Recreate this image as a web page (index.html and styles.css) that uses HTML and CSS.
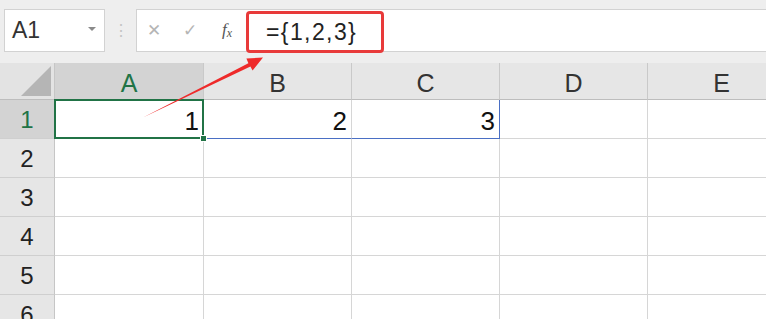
FILE: index.html
```html
<!DOCTYPE html>
<html lang="en">
<head>
    <meta charset="UTF-8">
    <title>Excel array constant</title>
    <link rel="stylesheet" href="styles.css">
</head>
<body>
    <div class="toolbar">
        <div class="namebox">
            <span class="namebox-text">A1</span>
            <span class="namebox-arrow"></span>
        </div>
        <div class="grip">⋮</div>
        <div class="formula-bar">
            <span class="fb-icon fb-cancel">✕</span>
            <span class="fb-icon fb-enter">✓</span>
            <span class="fb-icon fb-fx"><i>f</i><sub>x</sub></span>
            <div class="formula-input">
                <span class="formula-text">={1,2,3}</span>
            </div>
        </div>
    </div>

    <div class="sheet">
        <div class="corner"><span class="corner-tri"></span></div>
        <div class="col-head active">A</div>
        <div class="col-head">B</div>
        <div class="col-head">C</div>
        <div class="col-head">D</div>
        <div class="col-head">E</div>

        <div class="row-head active">1</div>
        <div class="cell selected">1<span class="fill-handle"></span></div>
        <div class="cell spill-bottom">2</div>
        <div class="cell spill-bottom spill-right">3</div>
        <div class="cell"></div>
        <div class="cell"></div>

        <div class="row-head">2</div>
        <div class="cell"></div><div class="cell"></div><div class="cell"></div><div class="cell"></div><div class="cell"></div>
        <div class="row-head">3</div>
        <div class="cell"></div><div class="cell"></div><div class="cell"></div><div class="cell"></div><div class="cell"></div>
        <div class="row-head">4</div>
        <div class="cell"></div><div class="cell"></div><div class="cell"></div><div class="cell"></div><div class="cell"></div>
        <div class="row-head">5</div>
        <div class="cell"></div><div class="cell"></div><div class="cell"></div><div class="cell"></div><div class="cell"></div>
        <div class="row-head">6</div>
        <div class="cell"></div><div class="cell"></div><div class="cell"></div><div class="cell"></div><div class="cell"></div>
    </div>

    <!-- annotation arrow pointing at the formula -->
    <svg class="arrow" width="766" height="319" viewBox="0 0 766 319">
        <polygon points="143,117.5 248.4,63.3 246.4,58.6 263,57.5 252.6,70.4 250.4,66.6" fill="#ee2a2a"/>
    </svg>
</body>
</html>
```

FILE: styles.css
```css
body {
    margin: 0;
    width: 766px;
    height: 319px;
    overflow: hidden;
    background-color: #eeeeee;
    font-family: "Liberation Sans", Arial, sans-serif;
    color: #222;
    position: relative;
}
.toolbar {
    display: flex;
    align-items: flex-start;
    height: 54px;
    padding-top: 9px;
}
.namebox {
    margin-left: 4px;
    width: 101px;
    height: 43px;
    box-sizing: border-box;
    border: 1px solid #d2d2d2;
    background-color: #fff;
    display: flex;
    align-items: center;
    justify-content: space-between;
    padding: 0 8px 0 7px;
}
.namebox-text {
    font-size: 23px;
    color: #333;
}
.namebox-arrow {
    width: 0;
    height: 0;
    border-left: 4px solid transparent;
    border-right: 4px solid transparent;
    border-top: 4px solid #8a8a8a;
    margin-bottom: 4px;
}
.grip {
    width: 31px;
    text-align: center;
    color: #c4c4c4;
    font-size: 16px;
    line-height: 43px;
}
.formula-bar {
    flex: 1;
    height: 43px;
    box-sizing: border-box;
    border: 1px solid #d2d2d2;
    border-right: none;
    background-color: #fff;
    display: flex;
    align-items: center;
}
.fb-icon {
    width: 37px;
    text-align: center;
    color: #b5b5b5;
    font-size: 17px;
}
.fb-cancel {
    width: 34px;
}
.fb-fx {
    width: 38px;
    color: #555;
    font-family: "Liberation Serif", serif;
    font-size: 17px;
}
.fb-fx sub {
    font-size: 12px;
    font-style: italic;
    vertical-align: -2px;
}
.formula-input {
    align-self: flex-start;
    margin-top: 1px;
}
.formula-text {
    display: inline-block;
    box-sizing: border-box;
    width: 138px;
    height: 42px;
    border: 3px solid #e83a3a;
    border-radius: 4px;
    padding-left: 17px;
    font-size: 23px;
    letter-spacing: 1.4px;
    line-height: 36px;
    color: #222;
}
.sheet {
    display: grid;
    grid-template-columns: 55px 149px repeat(4, 148px);
    grid-template-rows: 37px repeat(6, 39px);
}
.corner {
    background-color: #e3e3e3;
    border-right: 1px solid #c6c6c6;
    border-bottom: 1px solid #bdbdbd;
    position: relative;
}
.corner-tri {
    position: absolute;
    right: 3px;
    bottom: 3px;
    width: 30px;
    height: 30px;
    background-color: #b5b5b5;
    clip-path: polygon(100% 0, 100% 100%, 0 100%);
}
.col-head {
    background-color: #e6e6e6;
    border-right: 1px solid #c9c9c9;
    border-bottom: 1px solid #bdbdbd;
    text-align: center;
    font-size: 25px;
    line-height: 40px;
    color: #333;
}
.row-head {
    background-color: #e6e6e6;
    border-right: 1px solid #c6c6c6;
    border-bottom: 1px solid #cfcfcf;
    text-align: center;
    font-size: 24px;
    line-height: 40px;
    color: #222;
}
.col-head.active,
.row-head.active {
    background-color: #d3d3d3;
    color: #217346;
}
.cell {
    background-color: #fff;
    border-right: 1px solid #d6d6d6;
    border-bottom: 1px solid #d6d6d6;
    text-align: right;
    padding-right: 4px;
    font-size: 26px;
    line-height: 42px;
    color: #111;
    position: relative;
}
.cell.spill-bottom {
    border-bottom-color: #4a6fc4;
}
.cell.spill-right {
    border-right-color: #4a6fc4;
}
.cell.selected::after {
    content: "";
    position: absolute;
    left: -1px;
    top: -1px;
    right: -1px;
    bottom: -1px;
    border: 2px solid #217346;
}
.fill-handle {
    position: absolute;
    right: -4px;
    bottom: -4px;
    width: 5px;
    height: 5px;
    background-color: #217346;
    border: 1px solid #fff;
    z-index: 2;
}
.arrow {
    position: absolute;
    left: 0;
    top: 0;
    pointer-events: none;
}
```
